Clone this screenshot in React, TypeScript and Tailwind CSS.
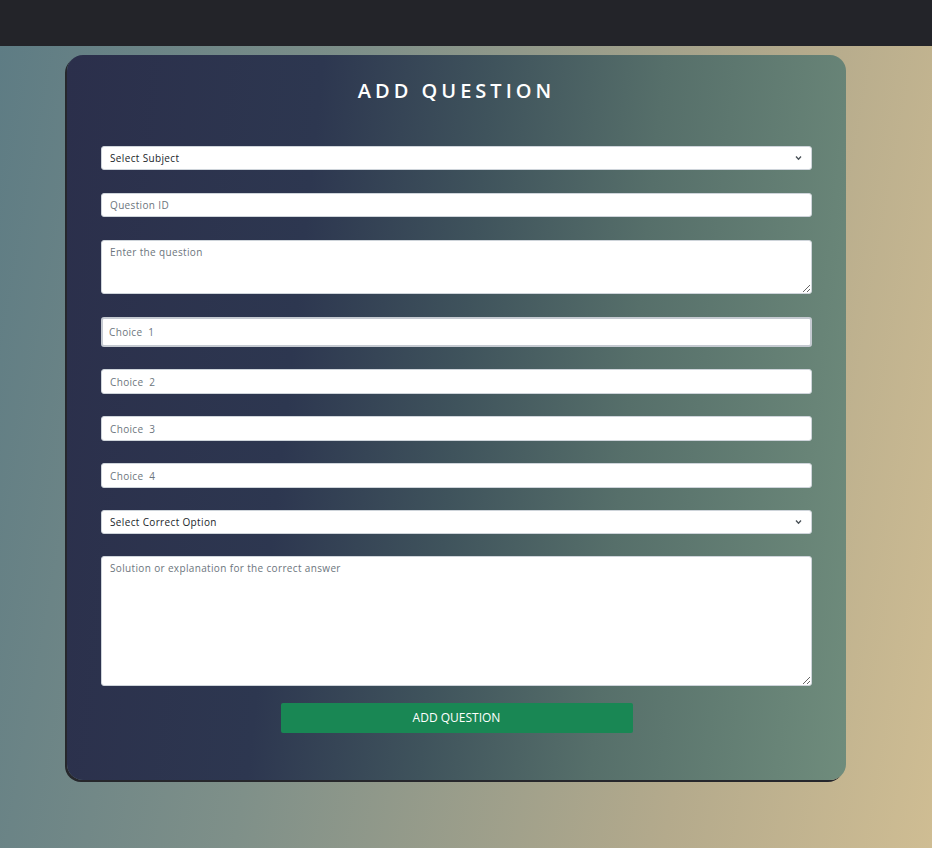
import React from "react";

function Chevron() {
  return (
    <svg
      className="pointer-events-none absolute right-[10px] top-1/2 -translate-y-1/2"
      width="7"
      height="5"
      viewBox="0 0 7 5"
      fill="none"
    >
      <path d="M1 1 3.5 3.8 6 1" stroke="#495057" strokeWidth="1.3" />
    </svg>
  );
}

function SelectField({ label }: { label: string }) {
  return (
    <div className="relative h-[24px]">
      <select
        defaultValue=""
        className="block h-[24px] w-full appearance-none rounded-[3px] border border-[#ced4da] bg-white pl-[8px] text-[10px] tracking-[0.035em] text-[#212529] outline-none"
      >
        <option value="">{label}</option>
      </select>
      <Chevron />
    </div>
  );
}

const inputCls =
  "block h-[25px] w-full rounded-[3px] border border-[#ced4da] bg-white px-[8px] text-[10px] tracking-[0.035em] text-[#212529] outline-none placeholder:text-[#6c757d]";

export default function App() {
  return (
    <div className="min-h-[848px] font-['Open_Sans',sans-serif]">
      <div className="h-[46px] bg-[#232429]" />
      <div className="min-h-[802px] bg-[linear-gradient(100deg,#5e7c84_0%,#7f9089_35%,#b4aa8c_75%,#cfbd93_100%)] pt-[9px] pb-[60px]">
        <div className="ml-[67px] w-[779px] rounded-[16px] bg-[linear-gradient(96deg,#2b2f4b_0%,#2d3750_30%,#3f535c_50%,#566f6a_70%,#6f8c7c_100%)] px-[34px] pt-[22px] pb-[47px] shadow-[-2px_2px_0_#26272c]">
          <h1 className="text-center text-[20px] font-semibold leading-[28px] tracking-[0.2em] text-white">
            ADD QUESTION
          </h1>
          <form className="mt-[41px] flex flex-col">
            <SelectField label="Select Subject" />
            <input
              className="mt-[23px] block h-[24px] w-full rounded-[3px] border border-[#ced4da] bg-white px-[8px] text-[10px] tracking-[0.035em] text-[#212529] outline-none placeholder:text-[#6c757d]"
              placeholder="Question ID"
            />
            <textarea
              className="mt-[23px] block h-[54px] w-full rounded-[3px] border border-[#ced4da] bg-white px-[8px] pt-[4px] text-[10px] tracking-[0.035em] text-[#212529] outline-none placeholder:text-[#6c757d]"
              placeholder="Enter the question"
            />
            <input
              className="mt-[23px] block h-[30px] w-full rounded-[3px] border-2 border-[#c5cad1] bg-white px-[6px] text-[10px] tracking-[0.035em] outline-none placeholder:text-[#6c757d]"
              placeholder={"Choice\u00a0 1"}
            />
            <input className={`${inputCls} mt-[22px]`} placeholder={"Choice\u00a0 2"} />
            <input className={`${inputCls} mt-[22px]`} placeholder={"Choice\u00a0 3"} />
            <input className={`${inputCls} mt-[22px]`} placeholder={"Choice\u00a0 4"} />
            <div className="mt-[22px]">
              <SelectField label="Select Correct Option" />
            </div>
            <textarea
              className="mt-[22px] block h-[130px] w-full rounded-[3px] border border-[#ced4da] bg-white px-[8px] pt-[4px] text-[10px] tracking-[0.035em] text-[#212529] outline-none placeholder:text-[#6c757d]"
              placeholder="Solution or explanation for the correct answer"
            />
            <button
              type="button"
              className="mx-auto mt-[17px] h-[30px] w-[352px] rounded-[2px] bg-[#198754] text-[12px] text-white"
            >
              ADD QUESTION
            </button>
          </form>
        </div>
      </div>
    </div>
  );
}
